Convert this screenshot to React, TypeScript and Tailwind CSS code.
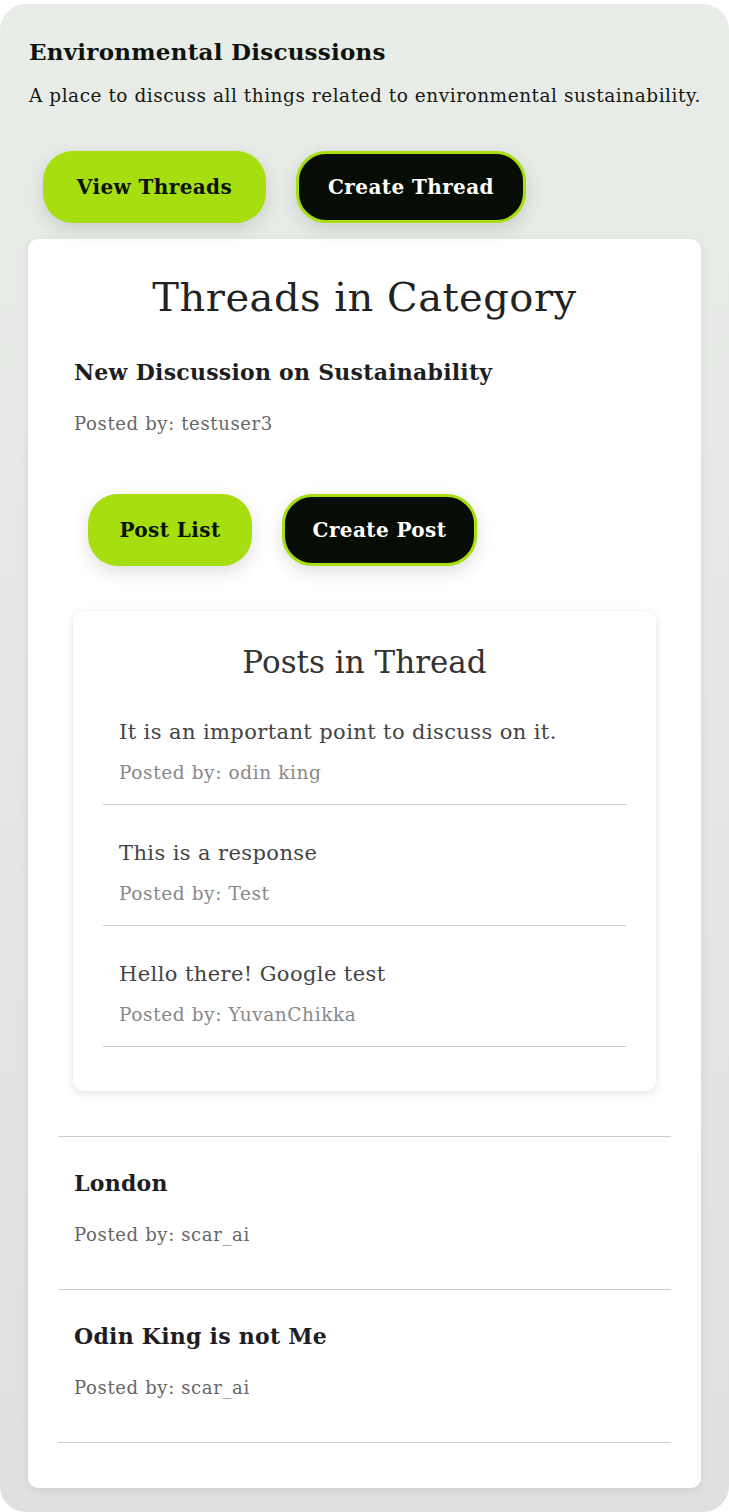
import React from "react";

const serif = { fontFamily: '"DejaVu Serif", "Liberation Serif", serif' };

function GreenBtn({ children, w }: { children: React.ReactNode; w: string }) {
  return (
    <button
      className={`h-[72px] ${w} rounded-[30px] bg-[#a6de10] text-[#0b1206] text-[20px] tracking-[0.4px] font-bold shadow-[0_6px_18px_rgba(0,0,0,0.13)]`}
    >
      {children}
    </button>
  );
}

function DarkBtn({ children, w }: { children: React.ReactNode; w: string }) {
  return (
    <button
      className={`h-[72px] ${w} rounded-[30px] bg-[#070d05] border-[3px] border-[#a6de10] text-white text-[20px] tracking-[0.4px] font-bold shadow-[0_6px_18px_rgba(0,0,0,0.13)]`}
    >
      {children}
    </button>
  );
}

const posts = [
  { text: "It is an important point to discuss on it.", by: "odin king" },
  { text: "This is a response", by: "Test" },
  { text: "Hello there! Google test", by: "YuvanChikka" },
];

export default function App() {
  return (
    <div className="bg-white pt-1 min-h-[1512px]" style={serif}>
      <div className="rounded-[26px] bg-gradient-to-b from-[#e9ede8] to-[#e0e0df] px-[28px] pt-[32px] pb-[24px]">
        <h1 className="text-[23px] leading-[32px] font-bold text-[#0e130c] pl-px tracking-[0.25px]">Environmental Discussions</h1>
        <p className="mt-[14px] text-[18.5px] leading-[28px] text-[#141812] pl-px tracking-[0.52px] whitespace-nowrap">
          A place to discuss all things related to environmental sustainability.
        </p>
        <div className="mt-[41px] flex gap-[30px] pl-[15px]">
          <GreenBtn w="w-[223px]">View Threads</GreenBtn>
          <DarkBtn w="w-[230px]">Create Thread</DarkBtn>
        </div>
        <div className="mt-[16px] bg-white rounded-[10px] shadow-[0_2px_8px_rgba(0,0,0,0.08)] px-[30px] pt-[30px] pb-[45px]">
          <h2 className="text-center text-[40px] leading-[57px] text-[#222] tracking-[0.5px]">Threads in Category</h2>
          <div className="border-b border-[#cccccc] px-[16px] pt-[30px] pb-[45px]">
            <h3 className="text-[22px] leading-[32px] font-bold text-[#1e1e22] tracking-[0.25px]">New Discussion on Sustainability</h3>
            <p className="mt-[22px] text-[18px] leading-[28px] text-[#666] tracking-[0.65px]">Posted by: testuser3</p>
            <div className="mt-[56px] flex gap-[30px] pl-[14px]">
              <GreenBtn w="w-[164px]">Post List</GreenBtn>
              <DarkBtn w="w-[195px]">Create Post</DarkBtn>
            </div>
            <div className="mt-[45px] -mx-px bg-white rounded-[10px] shadow-[0_2px_8px_rgba(0,0,0,0.12)] px-[30px] pt-[30px] pb-[44px]">
              <h3 className="text-center text-[31px] leading-[43px] text-[#333]">Posts in Thread</h3>
              {posts.map((p) => (
                <div key={p.text} className="border-b border-[#cccccc] px-[16px] pt-[34px] pb-[19px]">
                  <p className="text-[21px] leading-[28px] text-[#444] tracking-[0.4px]">{p.text}</p>
                  <p className="mt-[15px] text-[18.5px] leading-[24px] text-[#888] tracking-[0.6px]">Posted by: {p.by}</p>
                </div>
              ))}
            </div>
          </div>
          {[
            { t: "London", by: "scar_ai" },
            { t: "Odin King is not Me", by: "scar_ai" },
          ].map((t) => (
            <div key={t.t} className="border-b border-[#cccccc] px-[16px] pt-[30px] pb-[40px]">
              <h3 className="text-[22px] leading-[32px] font-bold text-[#1e1e22] tracking-[0.25px]">{t.t}</h3>
              <p className="mt-[22px] text-[18px] leading-[28px] text-[#666] tracking-[0.65px]">Posted by: {t.by}</p>
            </div>
          ))}
        </div>
      </div>
    </div>
  );
}
